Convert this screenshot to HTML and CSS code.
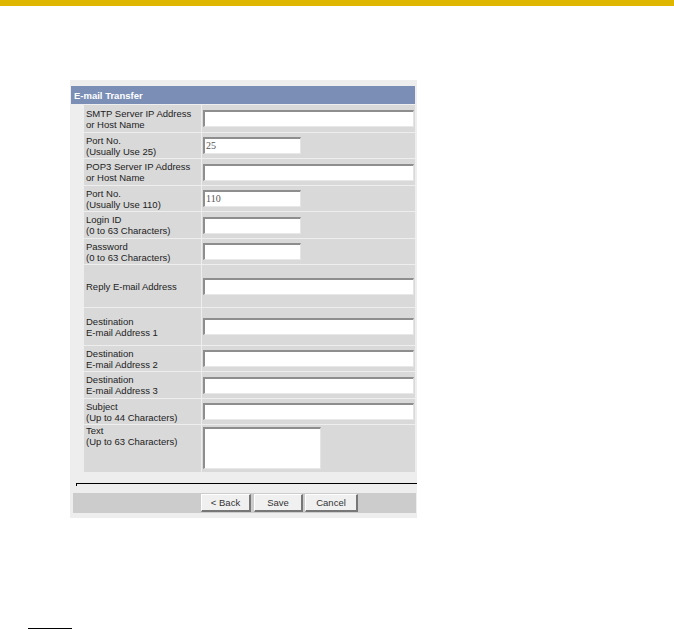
FILE: index.html
```html
<!DOCTYPE html>
<html lang="en">
<head>
    <meta charset="UTF-8">
    <title>E-mail Transfer</title>
    <link rel="stylesheet" href="styles.css">
</head>
<body>
<div class="top-bar"></div>
<div class="panel">
    <table class="form-table">
        <tr>
            <th colspan="3" class="panel-header">E-mail Transfer</th>
        </tr>
        <tr class="h27">
            <td class="indent"></td>
            <td class="label">SMTP Server IP Address<br>or Host Name</td>
            <td class="field"><input type="text" class="long"></td>
        </tr>
        <tr class="h25">
            <td class="indent"></td>
            <td class="label">Port No.<br>(Usually Use 25)</td>
            <td class="field"><input type="text" class="short" value="25"></td>
        </tr>
        <tr class="h26">
            <td class="indent"></td>
            <td class="label">POP3 Server IP Address<br>or Host Name</td>
            <td class="field"><input type="text" class="long"></td>
        </tr>
        <tr class="h25">
            <td class="indent"></td>
            <td class="label">Port No.<br>(Usually Use 110)</td>
            <td class="field"><input type="text" class="short" value="110"></td>
        </tr>
        <tr class="h26">
            <td class="indent"></td>
            <td class="label">Login ID<br>(0 to 63 Characters)</td>
            <td class="field"><input type="text" class="short"></td>
        </tr>
        <tr class="h25">
            <td class="indent"></td>
            <td class="label">Password<br>(0 to 63 Characters)</td>
            <td class="field"><input type="password" class="short"></td>
        </tr>
        <tr class="h42">
            <td class="indent"></td>
            <td class="label">Reply E-mail Address</td>
            <td class="field"><input type="text" class="long"></td>
        </tr>
        <tr class="h37">
            <td class="indent"></td>
            <td class="label">Destination<br>E-mail Address 1</td>
            <td class="field"><input type="text" class="long"></td>
        </tr>
        <tr class="h25">
            <td class="indent"></td>
            <td class="label">Destination<br>E-mail Address 2</td>
            <td class="field"><input type="text" class="long"></td>
        </tr>
        <tr class="h26">
            <td class="indent"></td>
            <td class="label">Destination<br>E-mail Address 3</td>
            <td class="field"><input type="text" class="long"></td>
        </tr>
        <tr class="h25">
            <td class="indent"></td>
            <td class="label">Subject<br>(Up to 44 Characters)</td>
            <td class="field"><input type="text" class="long"></td>
        </tr>
        <tr class="h45 top">
            <td class="indent"></td>
            <td class="label">Text<br>(Up to 63 Characters)</td>
            <td class="field"><textarea class="text-box"></textarea></td>
        </tr>
    </table>
    <div class="rule"></div>
    <div class="button-bar">
        <button class="btn-back">&lt; Back</button>
        <button class="btn-save">Save</button>
        <button class="btn-cancel">Cancel</button>
    </div>
</div>
<div class="footnote-line"></div>
</body>
</html>
```

FILE: styles.css
```css
body {
    font-family: "Liberation Sans", Arial, sans-serif;
    margin: 0;
    padding: 0;
    background-color: #fff;
    color: #222;
}
.top-bar {
    height: 6px;
    background-color: #dfb700;
}
.panel {
    margin: 74px 0 0 70px;
    width: 347px;
    padding: 5px 0 5px 0;
    background-color: #eeeeee;
}
.form-table {
    border-collapse: separate;
    border-spacing: 1px;
}
.form-table td {
    padding: 0;
}
.panel-header {
    height: 18px;
    padding: 0 3px;
    background-color: #7a8eb6;
    color: #fff;
    font-size: 9.5px;
    font-weight: bold;
    text-align: left;
}
.indent {
    width: 12px;
}
.form-table td.label {
    width: 115px;
    padding-left: 2px;
    background-color: #d9d9d9;
    font-size: 9.5px;
    line-height: 11px;
}
.form-table td.field {
    width: 212px;
    padding-left: 1px;
    background-color: #d9d9d9;
}
.h25 td { height: 25px; }
.h26 td { height: 26px; }
.h27 td { height: 27px; }
.h37 td { height: 37px; }
.h42 td { height: 42px; }
.h45 td { height: 45px; }
.top td {
    vertical-align: top;
}
.top td.field {
    padding-top: 2px;
}
.field input, .field textarea {
    display: block;
    box-sizing: border-box;
    margin: 0;
    padding: 0 1px;
    background: #fff;
    border-style: solid;
    border-width: 2px 1px 1px 2px;
    border-color: #8e8e8e #e4e4e4 #e8e8e8 #8e8e8e;
    font-family: "Liberation Serif", "Times New Roman", serif;
    font-size: 10px;
    color: #555;
    line-height: 12px;
}
.field input {
    height: 17px;
    padding-bottom: 2px;
}
.long {
    width: 211px;
}
.short {
    width: 98px;
}
.text-box {
    width: 118px;
    height: 42px;
    resize: none;
}
.rule {
    margin: 10px 0 0 6px;
    height: 2px;
    border-top: 1px solid #000;
    border-left: 1px solid #000;
}
.button-bar {
    display: flex;
    margin: 7px 0 0 3px;
    width: 343px;
    height: 20px;
    padding: 1px 0 0 128px;
    box-sizing: border-box;
    background-color: #cccccc;
}
.button-bar button {
    height: 18px;
    margin: 0;
    padding: 0;
    background-color: #f0f0f0;
    border-style: solid;
    border-width: 1px 2px 2px 1px;
    border-color: #fff #777 #777 #fff;
    font-family: "Liberation Sans", Arial, sans-serif;
    font-size: 9.5px;
    color: #333;
}
.btn-back {
    width: 50px;
    margin-right: 3px !important;
}
.btn-save {
    width: 49px;
    margin-right: 2px !important;
}
.btn-cancel {
    width: 53px;
}
.footnote-line {
    margin: 110px 0 0 28px;
    width: 44px;
    height: 1px;
    background-color: #000;
}
```
